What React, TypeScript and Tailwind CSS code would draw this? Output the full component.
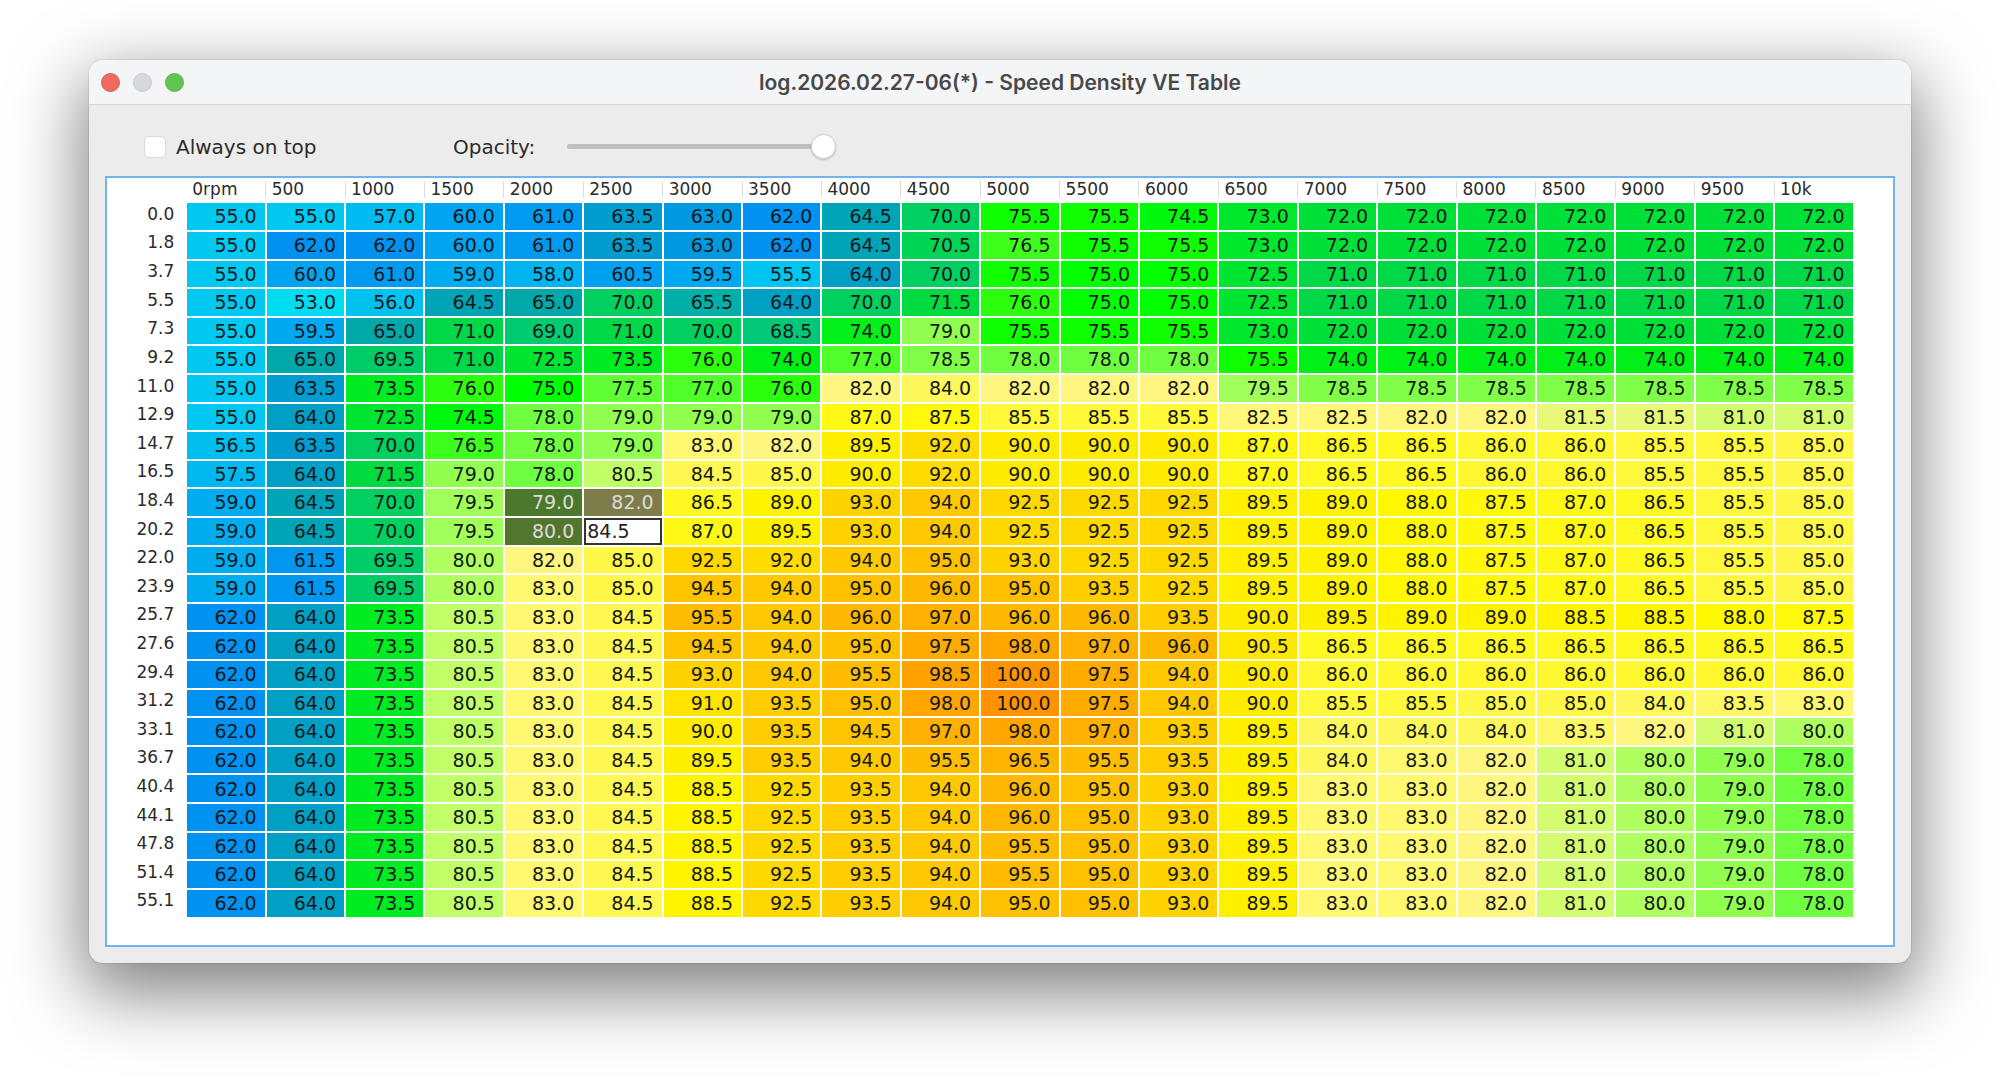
const rpm = ["0rpm", "500", "1000", "1500", "2000", "2500", "3000", "3500", "4000", "4500", "5000", "5500", "6000", "6500", "7000", "7500", "8000", "8500", "9000", "9500", "10k"]

// row label, then one value per rpm column
const table: [string, number[]][] = [
  ["0.0", [55, 55, 57, 60, 61, 63.5, 63, 62, 64.5, 70, 75.5, 75.5, 74.5, 73, 72, 72, 72, 72, 72, 72, 72]],
  ["1.8", [55, 62, 62, 60, 61, 63.5, 63, 62, 64.5, 70.5, 76.5, 75.5, 75.5, 73, 72, 72, 72, 72, 72, 72, 72]],
  ["3.7", [55, 60, 61, 59, 58, 60.5, 59.5, 55.5, 64, 70, 75.5, 75, 75, 72.5, 71, 71, 71, 71, 71, 71, 71]],
  ["5.5", [55, 53, 56, 64.5, 65, 70, 65.5, 64, 70, 71.5, 76, 75, 75, 72.5, 71, 71, 71, 71, 71, 71, 71]],
  ["7.3", [55, 59.5, 65, 71, 69, 71, 70, 68.5, 74, 79, 75.5, 75.5, 75.5, 73, 72, 72, 72, 72, 72, 72, 72]],
  ["9.2", [55, 65, 69.5, 71, 72.5, 73.5, 76, 74, 77, 78.5, 78, 78, 78, 75.5, 74, 74, 74, 74, 74, 74, 74]],
  ["11.0", [55, 63.5, 73.5, 76, 75, 77.5, 77, 76, 82, 84, 82, 82, 82, 79.5, 78.5, 78.5, 78.5, 78.5, 78.5, 78.5, 78.5]],
  ["12.9", [55, 64, 72.5, 74.5, 78, 79, 79, 79, 87, 87.5, 85.5, 85.5, 85.5, 82.5, 82.5, 82, 82, 81.5, 81.5, 81, 81]],
  ["14.7", [56.5, 63.5, 70, 76.5, 78, 79, 83, 82, 89.5, 92, 90, 90, 90, 87, 86.5, 86.5, 86, 86, 85.5, 85.5, 85]],
  ["16.5", [57.5, 64, 71.5, 79, 78, 80.5, 84.5, 85, 90, 92, 90, 90, 90, 87, 86.5, 86.5, 86, 86, 85.5, 85.5, 85]],
  ["18.4", [59, 64.5, 70, 79.5, 79, 82, 86.5, 89, 93, 94, 92.5, 92.5, 92.5, 89.5, 89, 88, 87.5, 87, 86.5, 85.5, 85]],
  ["20.2", [59, 64.5, 70, 79.5, 80, 84.5, 87, 89.5, 93, 94, 92.5, 92.5, 92.5, 89.5, 89, 88, 87.5, 87, 86.5, 85.5, 85]],
  ["22.0", [59, 61.5, 69.5, 80, 82, 85, 92.5, 92, 94, 95, 93, 92.5, 92.5, 89.5, 89, 88, 87.5, 87, 86.5, 85.5, 85]],
  ["23.9", [59, 61.5, 69.5, 80, 83, 85, 94.5, 94, 95, 96, 95, 93.5, 92.5, 89.5, 89, 88, 87.5, 87, 86.5, 85.5, 85]],
  ["25.7", [62, 64, 73.5, 80.5, 83, 84.5, 95.5, 94, 96, 97, 96, 96, 93.5, 90, 89.5, 89, 89, 88.5, 88.5, 88, 87.5]],
  ["27.6", [62, 64, 73.5, 80.5, 83, 84.5, 94.5, 94, 95, 97.5, 98, 97, 96, 90.5, 86.5, 86.5, 86.5, 86.5, 86.5, 86.5, 86.5]],
  ["29.4", [62, 64, 73.5, 80.5, 83, 84.5, 93, 94, 95.5, 98.5, 100, 97.5, 94, 90, 86, 86, 86, 86, 86, 86, 86]],
  ["31.2", [62, 64, 73.5, 80.5, 83, 84.5, 91, 93.5, 95, 98, 100, 97.5, 94, 90, 85.5, 85.5, 85, 85, 84, 83.5, 83]],
  ["33.1", [62, 64, 73.5, 80.5, 83, 84.5, 90, 93.5, 94.5, 97, 98, 97, 93.5, 89.5, 84, 84, 84, 83.5, 82, 81, 80]],
  ["36.7", [62, 64, 73.5, 80.5, 83, 84.5, 89.5, 93.5, 94, 95.5, 96.5, 95.5, 93.5, 89.5, 84, 83, 82, 81, 80, 79, 78]],
  ["40.4", [62, 64, 73.5, 80.5, 83, 84.5, 88.5, 92.5, 93.5, 94, 96, 95, 93, 89.5, 83, 83, 82, 81, 80, 79, 78]],
  ["44.1", [62, 64, 73.5, 80.5, 83, 84.5, 88.5, 92.5, 93.5, 94, 96, 95, 93, 89.5, 83, 83, 82, 81, 80, 79, 78]],
  ["47.8", [62, 64, 73.5, 80.5, 83, 84.5, 88.5, 92.5, 93.5, 94, 95.5, 95, 93, 89.5, 83, 83, 82, 81, 80, 79, 78]],
  ["51.4", [62, 64, 73.5, 80.5, 83, 84.5, 88.5, 92.5, 93.5, 94, 95.5, 95, 93, 89.5, 83, 83, 82, 81, 80, 79, 78]],
  ["55.1", [62, 64, 73.5, 80.5, 83, 84.5, 88.5, 92.5, 93.5, 94, 95, 95, 93, 89.5, 83, 83, 82, 81, 80, 79, 78]],
]

// value -> colour stops of the heat map
const stops: [number, number[]][] = [
  [53, [0, 220, 242]], [55, [0, 200, 240]], [57, [0, 188, 240]], [59, [0, 172, 240]], [60, [0, 164, 240]],
  [62, [0, 146, 240]], [63, [0, 152, 224]], [63.5, [0, 156, 208]], [64, [0, 160, 196]], [65, [0, 168, 170]],
  [65.5, [0, 176, 168]], [68.5, [0, 200, 120]], [70, [0, 208, 96]], [71, [0, 216, 72]], [72, [0, 224, 56]],
  [73, [0, 232, 44]], [74, [0, 240, 24]], [75, [0, 255, 0]], [75.5, [16, 255, 0]], [76, [44, 255, 14]],
  [77, [80, 255, 42]], [78, [112, 255, 64]], [79, [144, 255, 80]], [80, [176, 255, 96]], [80.5, [192, 255, 104]],
  [81, [212, 252, 112]], [81.5, [232, 248, 120]], [82, [255, 246, 128]], [83, [255, 248, 112]], [85, [255, 248, 72]],
  [87, [255, 248, 20]], [88, [255, 248, 0]], [89.5, [255, 240, 0]], [90, [255, 236, 0]], [92.5, [255, 216, 0]],
  [94, [255, 200, 0]], [95, [255, 192, 0]], [96, [255, 184, 0]], [97, [255, 176, 0]], [98, [255, 166, 0]], [100, [255, 148, 0]],
]

const heat = (v: number) => {
  for (let i = 1; i < stops.length; i++) {
    const [a, ca] = stops[i - 1]
    const [b, cb] = stops[i]
    if (v <= b) {
      const t = (v - a) / (b - a)
      return `rgb(${ca.map((c, k) => Math.round(c + (cb[k] - c) * t)).join(",")})`
    }
  }
  return "rgb(255,148,0)"
}

const selected: Record<string, string> = { "10-4": "#4c782c", "10-5": "#7e7c48", "11-4": "#53762f" }

const Cell = ({ value, row, col }: { value: number; row: number; col: number }) => {
  if (row === 11 && col === 5) {
    return (
      <div className="flex items-center border-2 border-[#333333] bg-white pl-[1px] text-[19px] text-[#222222]">
        {value.toFixed(1)}
      </div>
    )
  }
  const sel = selected[`${row}-${col}`]
  return (
    <div
      className={`flex items-center justify-end pr-[8px] text-[19px] ${sel ? "text-[#dcdcdc]" : "text-[#14181a]"}`}
      style={{ backgroundColor: sel ?? heat(value) }}
    >
      {value.toFixed(1)}
    </div>
  )
}

export default function App() {
  return (
    <div className="h-[1081px] overflow-hidden bg-white pl-[89px] pt-[60px]">
      <div className="flex h-[903px] w-[1822px] flex-col overflow-hidden rounded-[14px] bg-[#ececec] shadow-[0_24px_70px_6px_rgba(0,0,0,0.5),0_0_0_1px_rgba(0,0,0,0.08)]">
        <div className="relative flex h-[45px] shrink-0 items-center justify-center border-b border-[#d6d6d6] bg-[#f4f5f7] pt-[2px]">
          <div className="absolute left-[12px] top-[13px] flex gap-[13px]">
            <span className="h-[19px] w-[19px] rounded-full border border-[#e0574c] bg-[#ee6a5f]" />
            <span className="h-[19px] w-[19px] rounded-full border border-[#c9cacc] bg-[#d7d8da]" />
            <span className="h-[19px] w-[19px] rounded-full border border-[#55b548] bg-[#61c554]" />
          </div>
          <span className="font-['Inter',sans-serif] text-[21px] font-semibold text-[#48484a]">
            log.2026.02.27-06(*) - Speed Density VE Table
          </span>
        </div>

        <div className="flex h-[71px] shrink-0 items-center pl-[55px] pt-[12px] font-['DejaVu_Sans',sans-serif] text-[#2b2b2b]">
          <span className="h-[22px] w-[22px] rounded-[5px] border border-[#d9d9d9] bg-white" />
          <span className="ml-[10px] w-[277px] pt-[1px] text-[20px]">Always on top</span>
          <span className="text-[20px]">Opacity:</span>
          <div className="relative ml-[32px] h-[5px] w-[256px] rounded-full bg-[#bfbfbf]">
            <span className="absolute right-[-13px] top-[-10px] h-[25px] w-[25px] rounded-full border border-[#cfcfcf] bg-white shadow-[0_1px_2px_rgba(0,0,0,0.2)]" />
          </div>
        </div>

        <div className="mx-[16px] h-[771px] border-2 border-[#72b4f0] bg-white font-['DejaVu_Sans',sans-serif]">
          <div className="grid grid-cols-[78.3px_repeat(21,77.4px)] grid-rows-[23.3px_repeat(25,26.62px)] gap-[2px]">
            <div />
            {rpm.map((r, i) => (
              <div key={r} className="relative flex items-center pl-[5px] text-[17px] text-[#2a2a2a]">
                {i > 0 && <span className="absolute left-[-1.5px] top-[3px] h-[17px] w-px bg-[#dddddd]" />}
                {r}
              </div>
            ))}
            {table.map(([label, values], row) => [
              <div key={label} className="flex items-center justify-end pb-[4px] pr-[11px] text-[17px] text-[#2a2a2a]">
                {label}
              </div>,
              ...values.map((v, col) => <Cell key={`${row}-${col}`} value={v} row={row} col={col} />),
            ])}
          </div>
        </div>
      </div>
    </div>
  )
}
